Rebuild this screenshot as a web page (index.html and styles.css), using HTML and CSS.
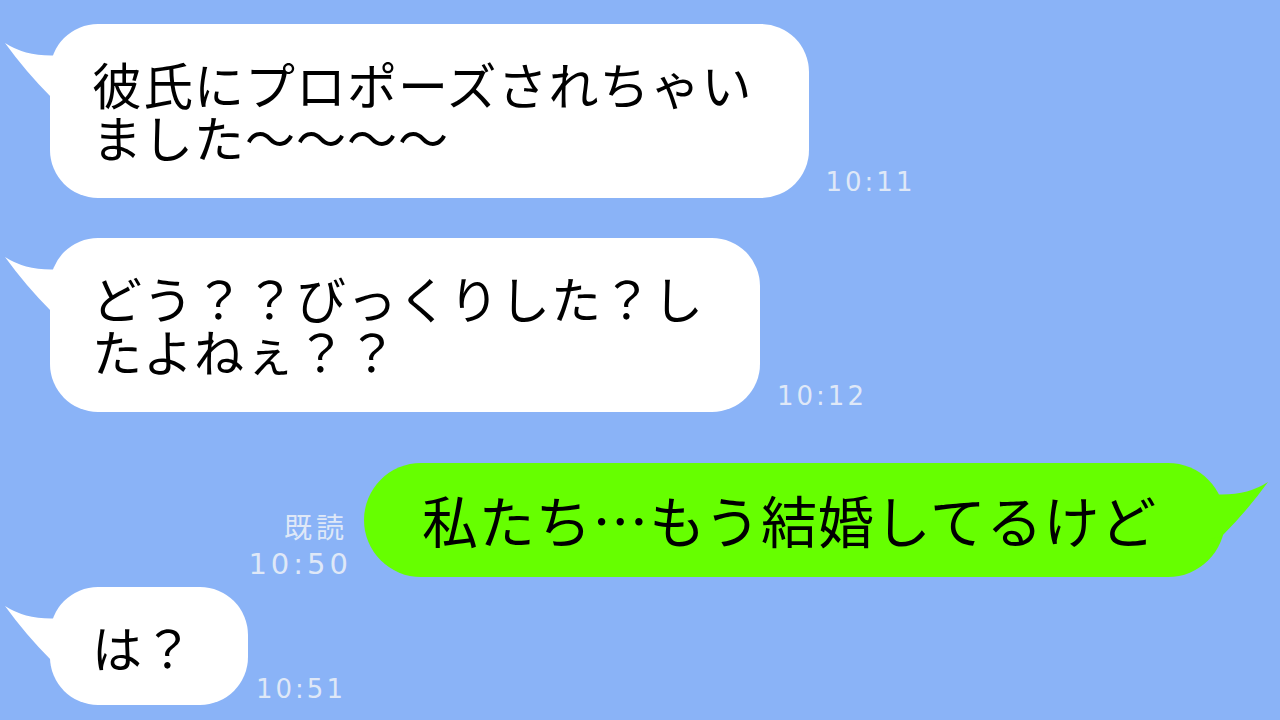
FILE: index.html
```html
<!DOCTYPE html>
<html lang="ja">
<head>
    <meta charset="UTF-8">
    <meta name="viewport" content="width=device-width, initial-scale=1.0">
    <title>トーク</title>
    <link rel="stylesheet" href="styles.css">
</head>
<body>

    <div class="chat">
        <div class="row in first">
            <div class="bubble">
                <svg class="tail" viewBox="0 0 60 60"><path d="M1 1 Q24 16 58 13 L58 58 L47 55 Q22 30 1 1 Z"/></svg>
                彼氏にプロポーズされちゃい<br>ました～～～～
            </div>
            <span class="time">10:11</span>
        </div>

        <div class="row in second">
            <div class="bubble">
                <svg class="tail" viewBox="0 0 60 60"><path d="M1 1 Q24 16 58 13 L58 58 L47 55 Q22 30 1 1 Z"/></svg>
                どう？？びっくりした？し<br>たよねぇ？？
            </div>
            <span class="time">10:12</span>
        </div>

        <!-- 自分のメッセージ -->
        <div class="row out">
            <div class="meta">
                <span class="read">既読</span>
                <span class="time big">10:50</span>
            </div>
            <div class="bubble green">
                <svg class="tail" viewBox="0 0 60 60"><path d="M1 1 Q24 16 58 13 L58 58 L47 55 Q22 30 1 1 Z"/></svg>
                私たち…もう結婚してるけど
            </div>
        </div>

        <div class="row in last">
            <div class="bubble short">
                <svg class="tail" viewBox="0 0 60 60"><path d="M1 1 Q24 16 58 13 L58 58 L47 55 Q22 30 1 1 Z"/></svg>
                は？
            </div>
            <span class="time">10:51</span>
        </div>
    </div>

</body>
</html>
```

FILE: styles.css
```css
body {
    margin: 0;
    height: 720px;
    overflow: hidden;
    background-color: #8ab3f7;
    font-family: "Noto Sans CJK JP", sans-serif;
}
.chat {
    display: flex;
    flex-direction: column;
    padding-top: 24px;
}
.row {
    display: flex;
    align-items: flex-end;
}
.row.in {
    padding-left: 50px;
    gap: 17px;
}
.row.second { margin-top: 40px; }
.row.out {
    justify-content: flex-end;
    padding-right: 55px;
    gap: 12px;
    margin-top: 51px;
}
.row.last {
    margin-top: 10px;
    gap: 8px;
}

.bubble {
    position: relative;
    background: #fff;
    color: #000;
    border-radius: 48px;
    padding: 33px 56px 35px 42px;
    font-size: 50px;
    line-height: 53px;
    letter-spacing: 1px;
    white-space: nowrap;
}
.bubble.short {
    padding: 33px 54px 32px 42px;
}
.tail {
    position: absolute;
    left: -46px;
    top: 18px;
    width: 60px;
    height: 60px;
    fill: #fff;
}
/* 緑の吹き出し */
.bubble.green {
    background: #66ff00;
    border-radius: 57px;
    padding: 26px 68px 28px 58px;
    font-size: 56px;
    line-height: 60px;
    letter-spacing: 0.8px;
}
.bubble.green .tail {
    left: auto;
    right: -44px;
    transform: scaleX(-1);
    fill: #66ff00;
}

.time {
    font-family: "DejaVu Sans", sans-serif;
    font-size: 26px;
    line-height: 1;
    letter-spacing: 3px;
    color: #dfe8f7;
    margin-bottom: 3px;
}
.meta {
    display: flex;
    flex-direction: column;
    align-items: flex-end;
}
.read {
    font-size: 28px;
    line-height: 1;
    letter-spacing: 4px;
    color: #dfe8f7;
    margin-bottom: 10px;
    margin-right: 4px;
}
.time.big {
    font-size: 29px;
    letter-spacing: 4px;
    margin-bottom: -2px;
}
```
